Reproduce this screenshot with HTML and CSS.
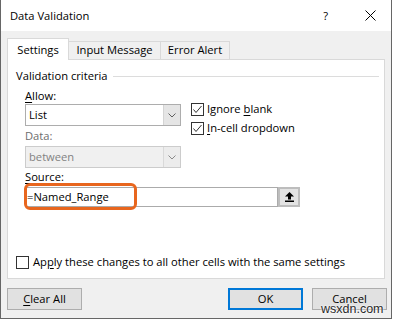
FILE: index.html
```html
<!DOCTYPE html>
<html>
<head>
<meta charset="utf-8">
<link rel="stylesheet" href="styles.css">
</head>
<body>
<div class="window">
  <div class="titlebar">
    <span class="title">Data Validation</span>
    <span class="help">?</span>
    <svg class="close" width="11" height="11" viewBox="0 0 11 11"><path d="M0.5 0.5L10.5 10.5M10.5 0.5L0.5 10.5" stroke="#000" stroke-width="1" fill="none"/></svg>
  </div>
  <div class="body">
    <div class="tabs">
      <div class="tab active tab-settings">Settings</div>
      <div class="tab tab-input">Input Message</div>
      <div class="tab tab-error">Error Alert</div>
    </div>
    <div class="panel">
      <div class="legend"><span>Validation criteria</span><span class="rule"></span></div>
      <div class="criteria">
        <div class="top">
          <div class="left">
            <div class="label label-allow"><u>A</u>llow:</div>
            <div class="combo">
              <span class="combo-text">List</span>
              <span class="drop"><svg width="8" height="5" viewBox="0 0 8 5"><polyline points="0.5,0.5 4,4 7.5,0.5" fill="none" stroke="#5f5f5f" stroke-width="1"/></svg></span>
            </div>
            <div class="label label-data disabled-text">Data:</div>
            <div class="combo combo-disabled">
              <span class="combo-text">between</span>
              <span class="drop"><svg width="8" height="5" viewBox="0 0 8 5"><polyline points="0.5,0.5 4,4 7.5,0.5" fill="none" stroke="#8a8a8a" stroke-width="1"/></svg></span>
            </div>
          </div>
          <div class="right">
            <div class="check-row">
              <span class="checkbox"><svg width="11" height="11" viewBox="0 0 11 11"><polyline points="1.5,5.5 4,8.5 9.5,2" fill="none" stroke="#333" stroke-width="1"/></svg></span>
              <span>Ignore <u>b</u>lank</span>
            </div>
            <div class="check-row">
              <span class="checkbox"><svg width="11" height="11" viewBox="0 0 11 11"><polyline points="1.5,5.5 4,8.5 9.5,2" fill="none" stroke="#333" stroke-width="1"/></svg></span>
              <span><u>I</u>n-cell dropdown</span>
            </div>
          </div>
        </div>
        <div class="label label-source"><u>S</u>ource:</div>
        <div class="source">
          <div class="source-input">=Named_Range</div>
          <div class="source-btn"><svg width="9" height="10" viewBox="0 0 9 10"><polygon points="4.5,0 0,4.5 9,4.5" fill="#000"/><rect x="3" y="4" width="3" height="3.5" fill="#000"/><rect x="0" y="8.5" width="9" height="1.5" fill="#000"/></svg></div>
          <div class="highlight"></div>
        </div>
      </div>
      <div class="apply">
        <span class="checkbox"></span>
        <span>Ap<u>p</u>ly these changes to all other cells with the same settings</span>
      </div>
    </div>
    <div class="buttons">
      <div class="btn"><u>C</u>lear All</div>
      <div class="spacer"></div>
      <div class="btn btn-default">OK</div>
      <div class="btn">Cancel</div>
    </div>
  </div>
  <div class="watermark">wsxdn.com</div>
</div>
</body>
</html>
```
FILE: styles.css
```css
* { box-sizing: border-box; }
html, body { margin: 0; padding: 0; background: #fff; }
body {
  font-family: "Open Sans", "Noto Sans", sans-serif;
  font-size: 11.2px;
  line-height: 16px;
  color: #000;
}
u { text-decoration: underline; text-underline-offset: 2px; text-decoration-thickness: 1px; }

.window {
  position: relative;
  width: 392px;
  height: 319px;
  border: 1px solid #666;
  border-top: none;
  display: flex;
  flex-direction: column;
}

.titlebar {
  height: 31px;
  background: #fff;
  display: flex;
  align-items: center;
  padding: 0 15px 0 9px;
}
.title { flex: 1; }
.help { margin-right: 37px; }
.close { display: block; }

.body {
  flex: 1;
  background: #f0f0f0;
  padding: 7px 6px 0 6px;
  display: flex;
  flex-direction: column;
}

.tabs { display: flex; align-items: flex-end; height: 21px; }
.tab {
  height: 18px;
  border: 1px solid #d9d9d9;
  border-left: none;
  border-bottom: none;
  background: #f0f0f0;
  text-align: center;
}
.tab.active {
  height: 22px;
  margin-bottom: -1px;
  border-left: 1px solid #d9d9d9;
  background: #fff;
  padding-top: 3px;
  position: relative;
  z-index: 1;
}
.tab-settings { width: 62px; }
.tab-input { width: 92px; }
.tab-error { width: 69px; }

.panel {
  height: 220px;
  background: #fff;
  border: 1px solid #d9d9d9;
  padding: 8px 5px 8px 8px;
  display: flex;
  flex-direction: column;
}
.legend { display: flex; align-items: center; height: 16px; }
.rule { flex: 1; height: 1px; background: #dcdcdc; margin: 1px 0 0 5px; }

.criteria { margin-left: 9px; }
.top { display: flex; gap: 10px; }
.left { width: 156px; display: flex; flex-direction: column; }
.right { padding-top: 17px; display: flex; flex-direction: column; gap: 3px; }

.label { height: 16px; }
.label-allow { margin-top: 4px; }
.label-data { margin-top: 2px; }
.label-source { margin-top: 1px; }
.disabled-text { color: #6d6d6d; }

.combo {
  height: 22px;
  border: 1px solid #adadad;
  background: #fff;
  display: flex;
}
.combo-disabled { margin-top: 2px; background: #f0f0f0; border-color: #cccccc; color: #838383; }
.combo-text { flex: 1; padding: 2px 0 0 3px; }
.drop {
  width: 17px;
  background: #e5e5e5;
  border-left: 1px solid #d4d4d4;
  display: flex;
  align-items: center;
  justify-content: center;
}
.combo-disabled .drop { background: #ececec; border-left-color: #d9d9d9; }
.drop svg { display: block; }

.check-row { display: flex; align-items: center; gap: 3px; height: 16px; }
.checkbox {
  width: 13px;
  height: 13px;
  border: 1px solid #333;
  background: #fff;
  display: flex;
  align-items: center;
  justify-content: center;
  flex: none;
}
.checkbox svg { display: block; }

.source { position: relative; display: flex; margin-top: 2px; }
.source-input {
  width: 253px;
  height: 20px;
  border: 1px solid #ababab;
  background: #fff;
  padding: 1px 0 0 1px;
}
.source-btn {
  width: 22px;
  height: 20px;
  border: 2px solid #bdbdbd;
  background: #e3e3e3;
  display: flex;
  align-items: center;
  justify-content: center;
}
.source-btn svg { display: block; }
.highlight {
  position: absolute;
  left: -1px;
  top: -4px;
  width: 113px;
  height: 27px;
  border: 3px solid #e8661e;
  border-radius: 6px;
}

.apply { margin-top: auto; display: flex; align-items: center; gap: 4px; height: 16px; }

.buttons { display: flex; margin-top: 9px; margin-right: -2px; }
.spacer { flex: 1; }
.btn {
  width: 75px;
  height: 22px;
  border: 1px solid #adadad;
  background: #e1e1e1;
  text-align: center;
  padding-top: 2px;
}
.btn-default { border: 2px solid #0078d7; padding-top: 1px; margin-right: 9px; }

.watermark {
  position: absolute;
  left: 320px;
  top: 302px;
  font-family: "Liberation Sans", Arial, sans-serif;
  font-size: 12.5px;
  line-height: 14px;
  color: #2a2a2a;
  text-shadow: 0 0 2px #fff, 0 0 2px #fff;
}
```
